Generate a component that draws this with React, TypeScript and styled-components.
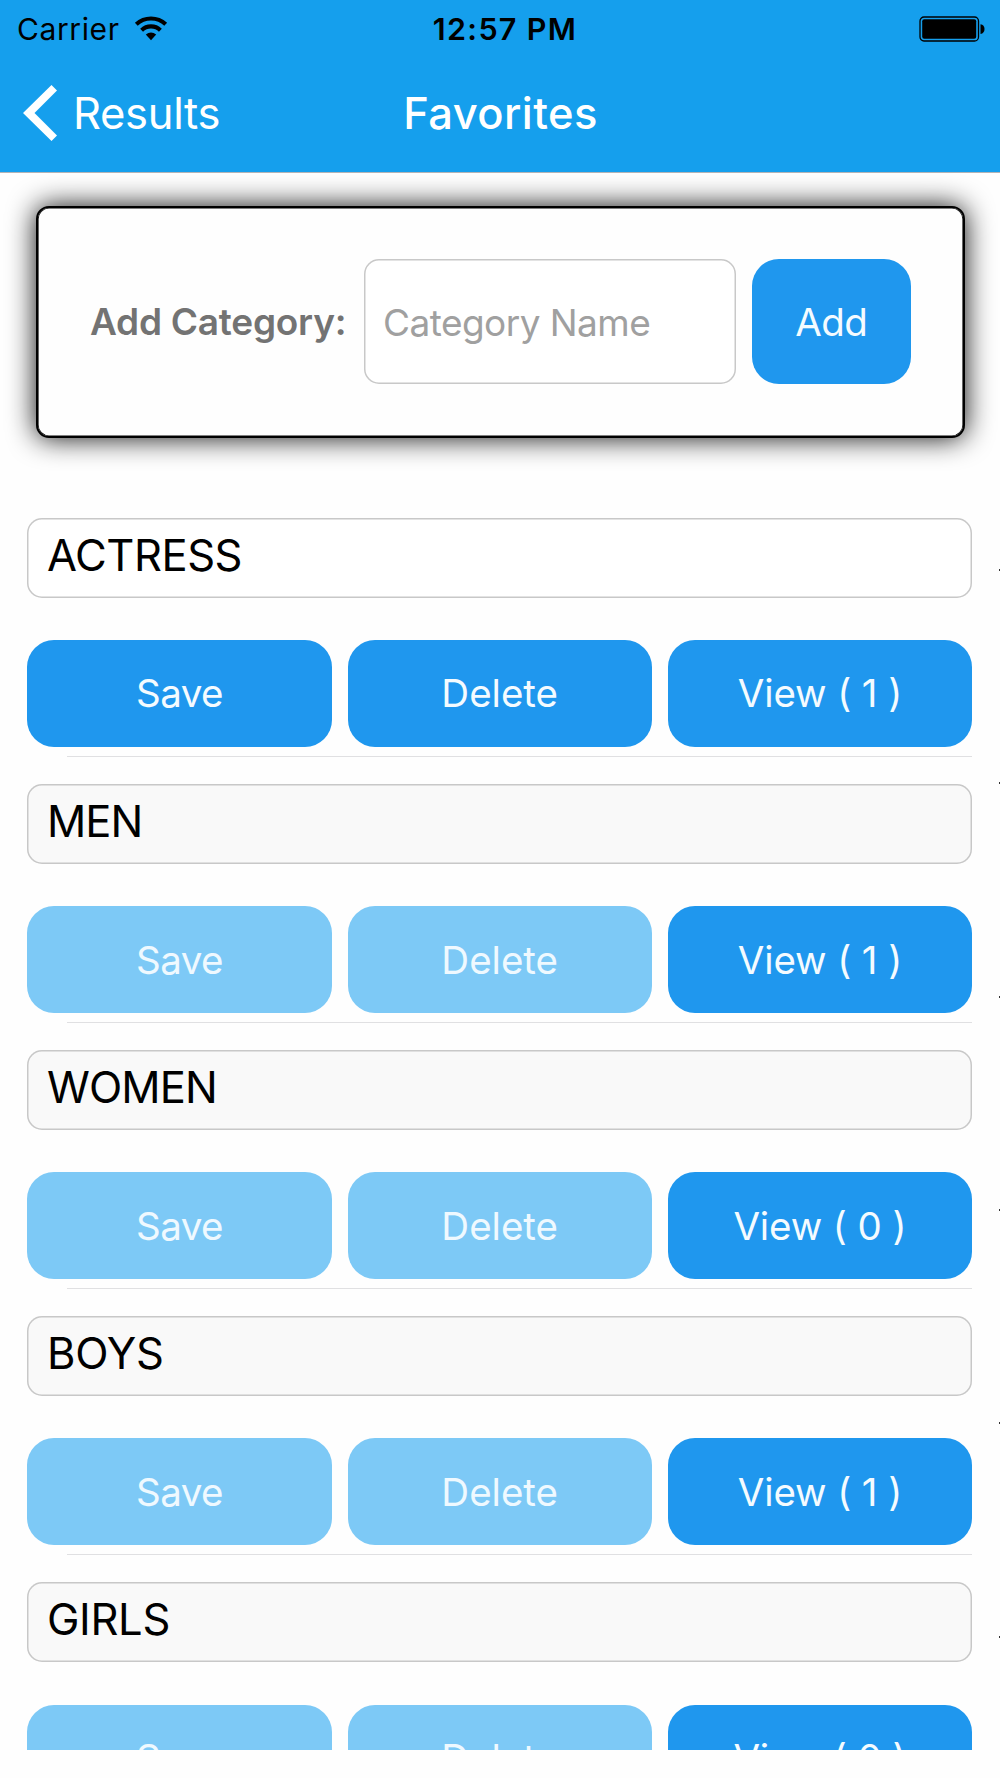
import React from "react";
import styled, { createGlobalStyle } from "styled-components";

const GlobalStyle = createGlobalStyle`
  *, *::before, *::after { box-sizing: border-box; }
  html, body { margin: 0; padding: 0; background: #fff; }
  body { font-family: Inter, "Liberation Sans", sans-serif; }
`;

const Screen = styled.main`
  position: relative;
  width: 1000px;
  height: 1778px;
  overflow: hidden;
  background: #fefefe;
`;

const TopBar = styled.header`
  height: 173px;
  background: #159fed;
  border-bottom: 1px solid #b3b3b6;
`;

const StatusBar = styled.div`
  display: grid;
  grid-template-columns: 1fr auto 1fr;
  align-items: center;
  height: 58px;
  padding: 0 15px 0 17px;
  color: #000;
`;

const Carrier = styled.div`
  display: flex;
  align-items: center;
  gap: 14px;
  font-size: 30px;
  line-height: 36px;
`;

const WifiIcon = styled.svg`
  display: block;
  margin-bottom: 2px;
`;

const Clock = styled.div`
  font-size: 30.5px;
  line-height: 36px;
  font-weight: 600;
  padding-left: 8px;
`;

const Battery = styled.svg`
  justify-self: end;
  display: block;
`;

const NavBar = styled.nav`
  display: grid;
  grid-template-columns: 1fr auto 1fr;
  align-items: center;
  height: 110px;
  padding: 0 23px;
  color: #fff;
`;

const Back = styled.a`
  display: flex;
  align-items: center;
  gap: 15px;
  font-size: 43.5px;
  line-height: 52px;
`;

const Title = styled.h1`
  margin: 0;
  padding-left: 1px;
  font-size: 43.5px;
  font-weight: 500;
  line-height: 52px;
`;

const AddCard = styled.section`
  display: flex;
  align-items: center;
  width: 929px;
  height: 232px;
  margin: 33px 0 0 36px;
  padding: 0 0 1px 52px;
  border: 2px solid #000;
  border-radius: 13px;
  background: #fefefe;
  box-shadow: inset 0 0 0 0.6px #000, 0 0 28px rgba(0, 0, 0, 0.95);
`;

const Label = styled.label`
  width: 274px;
  padding-top: 1px;
  color: #737373;
  font-size: 37px;
  font-weight: 600;
  line-height: 44px;
  white-space: nowrap;
`;

const NameField = styled.div`
  display: flex;
  align-items: center;
  width: 372px;
  height: 125px;
  padding: 1px 0 0 19px;
  border-radius: 15px;
  background: #fff;
  box-shadow: inset 0 0 0 1.5px #c8c8c8;
  color: #a0a0a0;
  font-size: 37px;
  white-space: nowrap;
`;

const Button = styled.button<{ $faded?: boolean; $by?: number }>`
  height: 107px;
  padding: 0;
  border: 0;
  border-radius: 27px;
  background: ${(p) => (p.$faded ? "#7dc9f6" : "#1f97ee")};
  color: ${(p) => (p.$faded ? "#eff9ff" : "#f4fbff")};
  font-family: inherit;
  font-size: 38.5px;
  font-weight: 400;
  line-height: 46px;
  letter-spacing: ${(p) => p.$by ?? 0}px;
  white-space: pre;
`;

const AddButton = styled(Button)`
  width: 159.5px;
  height: 125px;
  margin-left: 15.5px;
  padding-top: 1px;
`;

const List = styled.section`
  height: 1232.4px;
  margin-top: 79.6px;
  padding: 0 28px 0 27.400px;
  overflow: hidden;
`;

const Item = styled.article`
  height: 266.15px;
`;

const CategoryField = styled.div<{ $locked?: boolean }>`
  height: 80px;
  padding: 10px 0 0 19.5px;
  border-radius: 15px;
  background: ${(p) => (p.$locked ? "#f9f9f9" : "#fff")};
  box-shadow: inset 0 0 0 1.5px #c8c8c8;
  color: #000;
  font-size: 43.5px;
  line-height: 54px;
`;

const Actions = styled.div`
  display: grid;
  grid-template-columns: repeat(3, 1fr);
  gap: 16px;
  margin-top: 42.4px;
`;

const Separator = styled.hr`
  height: 1px;
  margin: 9px 0 0 40px;
  border: 0;
  background: #e0e0e2;
`;

const EdgeMark = styled.i`
  position: absolute;
  right: 0;
  width: 1px;
  height: 2px;
  background: #333;
`;

const Tracked = styled.span<{ $by: number }>`
  letter-spacing: ${(p) => p.$by}px;
`;

const categories = [
  { name: "ACTRESS", count: 1, locked: false, tracking: -0.45 },
  { name: "MEN", count: 1, locked: true, tracking: -0.9 },
  { name: "WOMEN", count: 0, locked: true, tracking: -0.85 },
  { name: "BOYS", count: 1, locked: true, tracking: -0.2 },
  { name: "GIRLS", count: 0, locked: true, tracking: -0.3 },
];

const edgeMarks = [568.5, 782, 995.5, 1208.5, 1422, 1635.5];

export default function App() {
  return (
    <Screen>
      <GlobalStyle />
      <TopBar>
        <StatusBar>
          <Carrier>
            <Tracked $by={0.6}>Carrier</Tracked>
            <WifiIcon width="34" height="25" viewBox="0 0 34 25" fill="none" stroke="#000" strokeWidth="4.1">
              <path d="M2.3 8.3 A21.5 21.5 0 0 1 31.7 8.3" />
              <path d="M7.6 14.2 A13.4 13.4 0 0 1 26.4 14.2" />
              <path d="M11.8 18.6 Q17 14.3 22.2 18.6 L17 24.2 Z" fill="#000" stroke="none" />
            </WifiIcon>
          </Carrier>
          <Clock><Tracked $by={1.3}>12:57 PM</Tracked></Clock>
          <Battery width="66" height="26" viewBox="0 0 66 26">
            <rect x="1" y="1" width="58.5" height="24" rx="4" fill="none" stroke="#000" strokeWidth="1.3" />
            <rect x="3.2" y="3.2" width="54" height="19.6" rx="2" fill="#000" />
            <path d="M61.5 8.2 Q65.5 9 65.5 13 Q65.5 17.2 61.5 18 Z" fill="#000" />
          </Battery>
        </StatusBar>
        <NavBar>
          <Back>
            <svg width="35" height="58" viewBox="0 0 35 58" fill="#fff">
              <path d="M28.5 1 L34 6.5 L11.5 29 L34 51.5 L28.5 57 L0 29 Z" />
            </svg>
            <Tracked $by={-0.3}>Results</Tracked>
          </Back>
          <Title><Tracked $by={0.4}>Favorites</Tracked></Title>
        </NavBar>
      </TopBar>

      <AddCard>
        <Label><Tracked $by={-0.25}>Add Category:</Tracked></Label>
        <NameField><Tracked $by={-0.55}>Category Name</Tracked></NameField>
        <AddButton $by={-0.6}>Add</AddButton>
      </AddCard>

      <List>
        {categories.map((c) => (
          <Item key={c.name}>
            <CategoryField $locked={c.locked}>
              <Tracked $by={c.tracking}>{c.name}</Tracked>
            </CategoryField>
            <Actions>
              <Button $faded={c.locked} $by={-0.5}>Save</Button>
              <Button $faded={c.locked}>Delete</Button>
              <Button $by={-0.1}>{`View ( ${c.count} )`}</Button>
            </Actions>
            <Separator />
          </Item>
        ))}
      </List>
      {edgeMarks.map((y) => (
        <EdgeMark key={y} style={{ top: y }} />
      ))}
    </Screen>
  );
}
